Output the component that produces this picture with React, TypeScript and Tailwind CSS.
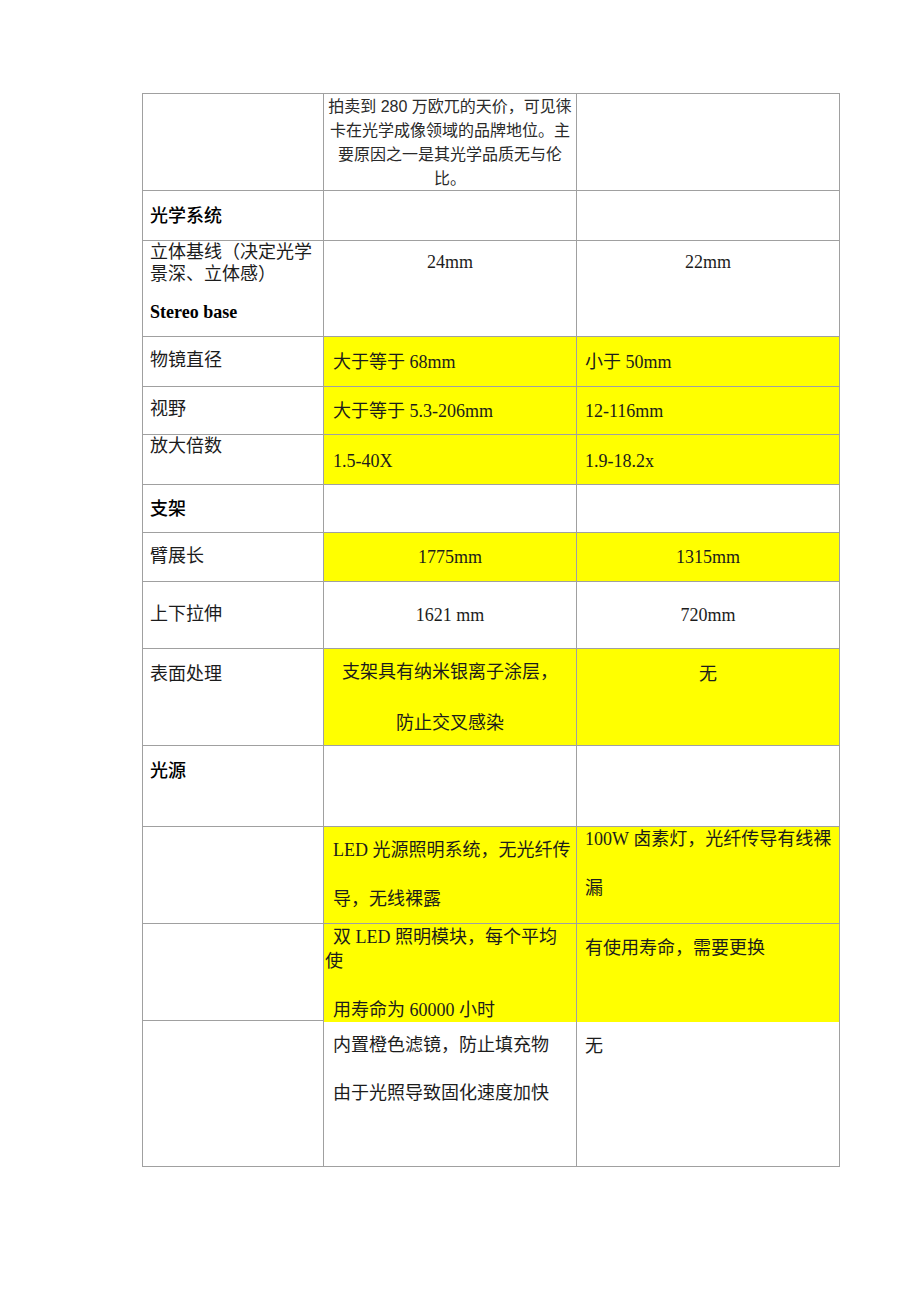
import type { ReactNode } from 'react'

const serif = "font-['Liberation_Serif','Noto_Sans_CJK_SC',serif]"
const sans = "font-['Liberation_Sans','Noto_Sans_CJK_SC',sans-serif]"

function Row({ h, children }: { h: string; children: ReactNode }) {
  return (
    <div className={`grid grid-cols-[181px_253px_263px] border-b border-[#a0a0a0] ${h}`}>
      {children}
    </div>
  )
}

function Cell({
  className = '',
  size = 'text-[18px] leading-[22px] text-[#1c1c1c]',
  children,
}: {
  className?: string
  size?: string
  children?: ReactNode
}) {
  return (
    <div className={`border-r border-[#a0a0a0] whitespace-nowrap overflow-visible ${size} ${className}`}>
      {children}
    </div>
  )
}

function Heading({ children }: { children: ReactNode }) {
  return (
    <Cell className="flex items-center pl-[7px]">
      <span className={`${sans} font-medium text-black`}>{children}</span>
    </Cell>
  )
}

export default function App() {
  return (
    <div className={`min-h-[1302px] bg-white pt-[93px] pl-[142px] ${serif}`}>
      <div className="w-[698px] border-l border-t border-[#a0a0a0]">
        <Row h="h-[97px]">
          <Cell />
          <Cell
            size="text-[16px] leading-[24px] text-[#2a2a2a]"
            className={`${sans} text-center pt-px`}
          >
            <div>拍卖到 280 万欧兀的天价，可见徕</div>
            <div>卡在光学成像领域的品牌地位。主</div>
            <div>要原因之一是其光学品质无与伦</div>
            <div>比。</div>
          </Cell>
          <Cell />
        </Row>

        <Row h="h-[50px]">
          <Heading>光学系统</Heading>
          <Cell />
          <Cell />
        </Row>

        <Row h="h-[96px]">
          <Cell className="pl-[7px]">
            <div>立体基线（决定光学</div>
            <div>景深、立体感）</div>
            <div className="mt-[16px] font-bold text-black">Stereo base</div>
          </Cell>
          <Cell className="pt-[10px] text-center">24mm</Cell>
          <Cell className="pt-[10px] text-center">22mm</Cell>
        </Row>

        <Row h="h-[50px]">
          <Cell className="flex items-center pl-[7px] pb-[3px]">物镜直径</Cell>
          <Cell className="flex items-center pl-[9px] bg-[#ffff00]">大于等于 68mm</Cell>
          <Cell className="flex items-center pl-[8px] bg-[#ffff00]">小于 50mm</Cell>
        </Row>

        <Row h="h-[48px]">
          <Cell className="flex items-center pl-[7px] pb-[3px]">视野</Cell>
          <Cell className="flex items-center pl-[9px] bg-[#ffff00]">大于等于 5.3-206mm</Cell>
          <Cell className="flex items-center pl-[8px] bg-[#ffff00]">12-116mm</Cell>
        </Row>

        <Row h="h-[50px]">
          <Cell className="pl-[7px]">放大倍数</Cell>
          <Cell className="pl-[9px] pt-[15px] bg-[#ffff00]">1.5-40X</Cell>
          <Cell className="pl-[8px] pt-[15px] bg-[#ffff00]">1.9-18.2x</Cell>
        </Row>

        <Row h="h-[48px]">
          <Heading>支架</Heading>
          <Cell />
          <Cell />
        </Row>

        <Row h="h-[49px]">
          <Cell className="flex items-center pl-[7px] pb-[2px]">臂展长</Cell>
          <Cell className="flex items-center justify-center bg-[#ffff00]">1775mm</Cell>
          <Cell className="flex items-center justify-center bg-[#ffff00]">1315mm</Cell>
        </Row>

        <Row h="h-[67px]">
          <Cell className="flex items-center pl-[7px] pb-[2px]">上下拉伸</Cell>
          <Cell className="flex items-center justify-center">1621 mm</Cell>
          <Cell className="flex items-center justify-center">720mm</Cell>
        </Row>

        <Row h="h-[97px]">
          <Cell className="pl-[7px] pt-[14px]">表面处理</Cell>
          <Cell className="pt-[12px] text-center bg-[#ffff00]">
            <div>支架具有纳米银离子涂层，</div>
            <div className="mt-[29px]">防止交叉感染</div>
          </Cell>
          <Cell className="pt-[14px] text-center bg-[#ffff00]">无</Cell>
        </Row>

        <Row h="h-[81px]">
          <Cell className="pl-[7px] pt-[14px]">
            <span className={`${sans} font-medium text-black`}>光源</span>
          </Cell>
          <Cell />
          <Cell />
        </Row>

        <Row h="h-[97px]">
          <Cell />
          <Cell className="pl-[9px] pt-[12px] bg-[#ffff00]">
            <div>LED 光源照明系统，无光纤传</div>
            <div className="mt-[27px]">导，无线裸露</div>
          </Cell>
          <Cell className="pl-[8px] pt-px bg-[#ffff00]">
            <div>100W 卤素灯，光纤传导有线裸</div>
            <div className="mt-[27px]">漏</div>
          </Cell>
        </Row>

        <Row h="h-[97px]">
          <Cell />
          <Cell size="text-[18px] leading-[24px] text-[#1c1c1c]" className="pt-px bg-[#ffff00]">
            <div className="pl-[9px]">双 LED 照明模块，每个平均</div>
            <div className="pl-px">使</div>
            <div className="pl-[9px] mt-[25px]">用寿命为 60000 小时</div>
          </Cell>
          <Cell className="pl-[8px] pt-[13px] bg-[#ffff00]">有使用寿命，需要更换</Cell>
        </Row>

        <Row h="h-[146px]">
          <Cell />
          <Cell className="pl-[9px] pt-[13px]">
            <div>内置橙色滤镜，防止填充物</div>
            <div className="mt-[26px]">由于光照导致固化速度加快</div>
          </Cell>
          <Cell className="pl-[8px] pt-[14px]">无</Cell>
        </Row>
      </div>
    </div>
  )
}
